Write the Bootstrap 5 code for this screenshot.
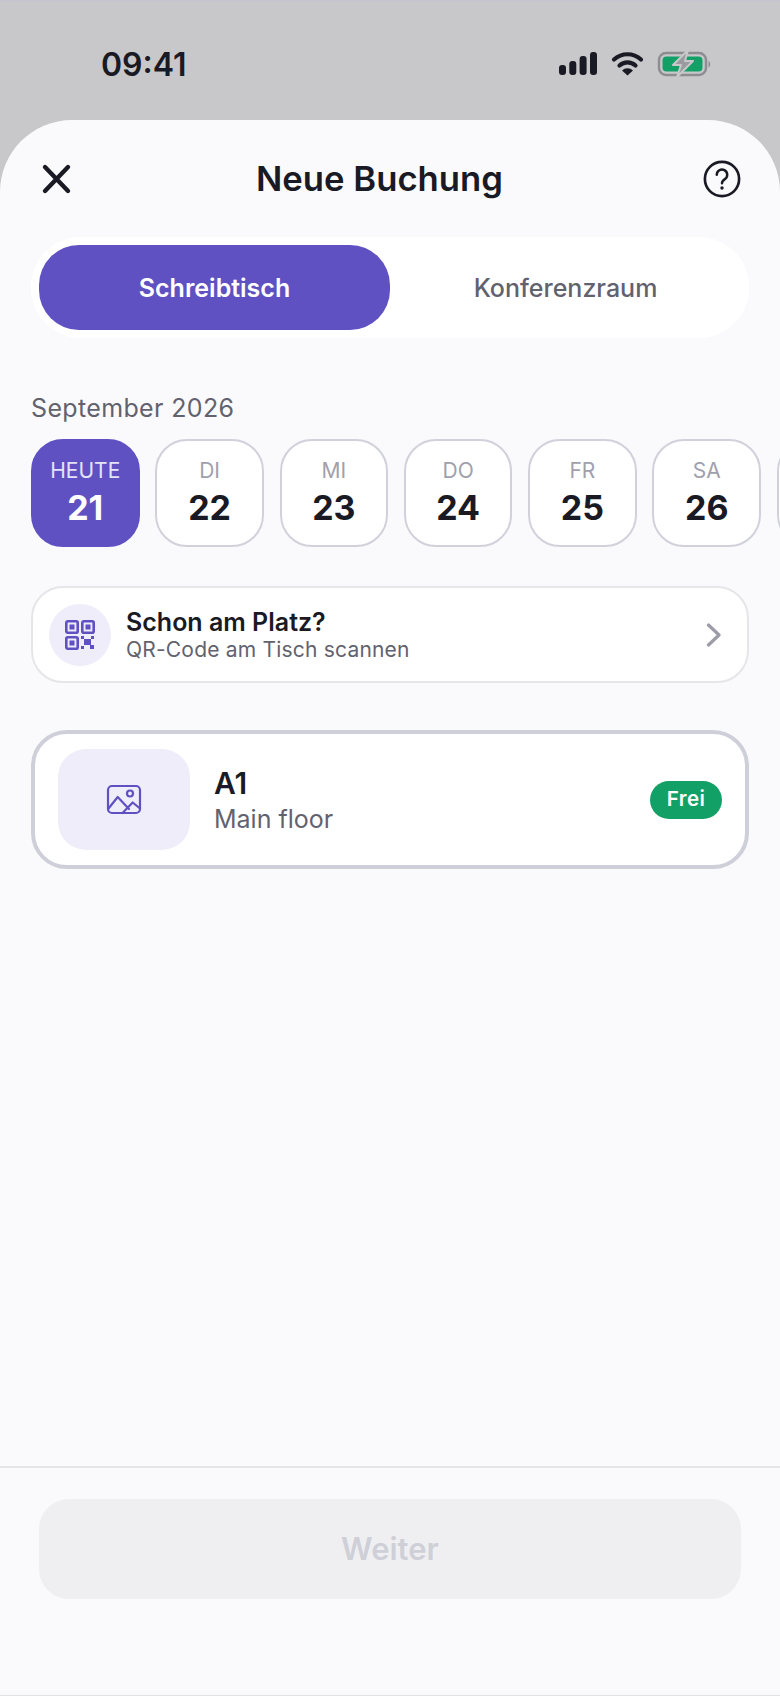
<!DOCTYPE html>
<html lang="de">
<head>
    <meta charset="UTF-8">
    <meta name="viewport" content="width=device-width, initial-scale=1.0">
    <title>Neue Buchung</title>
  <link href="https://cdn.jsdelivr.net/npm/bootstrap@5.3.3/dist/css/bootstrap.min.css" rel="stylesheet">
  <script src="https://cdn.jsdelivr.net/npm/bootstrap@5.3.3/dist/js/bootstrap.bundle.min.js"></script>
  <style>
    html, body { height: 100%; }
    body { font-family: Inter, "Liberation Sans", sans-serif; background: #c8c8ca; color: #1a1a24; overflow: hidden; }
    .phone { height: 1696px; border-top: 1px solid #c4c4d2; border-bottom: 1px solid #e0e0e6; }
    .status-bar { height: 119px; padding: 7px 68px 0 101px; }
    .status-time { font-size: 32px; font-weight: 600; line-height: 1; margin-top: 2px; }
    .sheet { background: #fafafc; border-radius: 72px 72px 0 0; }
    .sheet-head { height: 117px; padding: 0 39px 0 40px; }
    .sheet-title { font-size: 34.700px; font-weight: 600; margin: 0 16px 0 0; line-height: 1; }
    .seg { margin: 0 31px; height: 101px; padding: 8px; background: #fff; border-radius: 50px; }
    .seg-item { flex: 1 1 0; border: 0; background: none; padding-top: 3px; font-size: 25px; font-weight: 500; color: #62626f; border-radius: 40px; }
    .seg-item.is-on { background: #5f51c2; color: #fff; font-weight: 600; }
    .month-label { margin: 56px 0 0 31px; font-size: 25px; line-height: 28px; color: #62626f; letter-spacing: .35px; }
    .day-row { margin: 17px 0 0 31px; gap: 15.800px; overflow: hidden; }
    .day-cell { flex: 0 0 108.500px; height: 108px; background: #fff; border: 2px solid #d1d1dc; border-radius: 32px; text-align: center; }
    .day-name { font-size: 21px; line-height: 24px; margin-top: 18px; color: #a0a0ac; }
    .day-num { font-size: 34px; font-weight: 700; line-height: 40px; margin-top: 5px; }
    .day-cell.is-on { background: #5f51c2; border-color: #5f51c2; color: #fff; }
    .day-cell.is-on .day-name { color: #e6e3f7; }
    .scan-row { margin: 39px 31px 0; height: 97px; padding: 0 25px 0 16px; background: #fff; border: 2px solid #e5e5ea; border-radius: 32px; }
    .scan-icon { width: 62px; height: 62px; background: #efedfa; border-radius: 50%; }
    .scan-text { margin-left: 15px; }
    .scan-title { font-size: 25px; font-weight: 600; line-height: 30px; }
    .scan-sub { font-size: 21px; line-height: 24px; margin-top: 1px; color: #62626f; letter-spacing: .2px; }
    .desk-card { margin: 47px 31px 0; height: 139px; padding: 0 23px; background: #fff; border: 4px solid #cfcfda; border-radius: 36px; }
    .desk-thumb { width: 132px; height: 101px; background: #efedfa; border-radius: 28px; }
    .desk-name { font-size: 30px; font-weight: 600; line-height: 36px; }
    .desk-floor { font-size: 25px; line-height: 32px; margin-top: 2px; color: #62626f; }
    .free-pill { width: 72px; height: 38px; background: #12a066; color: #fff; font-size: 20.500px; font-weight: 600; border-radius: 19px; letter-spacing: .4px; }
    .sheet-foot { height: 229px; padding: 31px 39px 0; border-top: 2px solid #e5e5ea; }
    .next-btn { height: 100px; background: #efeff1; border-radius: 30px; color: #cfcfd8; font-size: 31px; font-weight: 600; border: 0; width: 100%; }
  </style>
</head>
<body>

    <div class="phone d-flex flex-column">

    <!-- Status bar -->
    <div class="status-bar d-flex align-items-center justify-content-between">
        <span class="status-time">09:41</span>
        <svg width="153" height="28" viewBox="0 0 153 28">
            <rect x="0" y="15" width="7" height="10" rx="3" fill="#1a1a24"/>
            <rect x="10.300" y="11" width="7" height="14" rx="3" fill="#1a1a24"/>
            <rect x="20.600" y="6" width="7" height="19" rx="3" fill="#1a1a24"/>
            <rect x="31" y="2" width="7" height="23" rx="3" fill="#1a1a24"/>
            <path d="M55 9.500a20 20 0 0 1 27 0M60.500 15.500a12 12 0 0 1 16 0" fill="none" stroke="#1a1a24" stroke-width="4.200" stroke-linecap="round"/>
            <path d="M63 20.500a8 8 0 0 1 11 0l-5.500 5z" fill="#1a1a24"/>
            <rect x="100" y="3" width="47" height="22" rx="7" fill="none" stroke="#8c8c92" stroke-width="2.400"/>
            <rect x="103.500" y="6.500" width="40" height="15" rx="4" fill="#12a066"/>
            <path d="M149.500 11c2 .5 2.500 5.500 0 6.500z" fill="#8c8c92"/>
            <path d="M129 0 114 15h8l-4 12 16-16h-8l3-11z" fill="#9a9a9f" stroke="#c8c8ca" stroke-width="2" stroke-linejoin="round"/>
        </svg>
    </div>

    <!-- Sheet -->
    <div class="sheet flex-grow-1 d-flex flex-column">

        <div class="sheet-head d-flex align-items-center justify-content-between">
            <svg width="32" height="32" viewBox="0 0 32 32"><path d="M5 4l23 24M28 4 5 28" stroke="#1a1a24" stroke-width="4.400" stroke-linecap="round"/></svg>
            <h1 class="sheet-title">Neue Buchung</h1>
            <svg width="38" height="38" viewBox="0 0 40 40">
                <circle cx="20" cy="20" r="18" fill="none" stroke="#1a1a24" stroke-width="2.800"/>
                <path d="M14.500 15.500a5.500 5.500 0 1 1 8.500 4.600c-2 1.300-3 2.400-3 4.400" fill="none" stroke="#1a1a24" stroke-width="2.600" stroke-linecap="round"/>
                <circle cx="20" cy="29.500" r="1.800" fill="#1a1a24"/>
            </svg>
        </div>

        <div class="seg d-flex">
            <button class="seg-item is-on">Schreibtisch</button>
            <button class="seg-item">Konferenzraum</button>
        </div>

        <div class="month-label">September 2026</div>

        <div class="day-row d-flex">
            <div class="day-cell is-on"><div class="day-name">HEUTE</div><div class="day-num">21</div></div>
            <div class="day-cell"><div class="day-name">DI</div><div class="day-num">22</div></div>
            <div class="day-cell"><div class="day-name">MI</div><div class="day-num">23</div></div>
            <div class="day-cell"><div class="day-name">DO</div><div class="day-num">24</div></div>
            <div class="day-cell"><div class="day-name">FR</div><div class="day-num">25</div></div>
            <div class="day-cell"><div class="day-name">SA</div><div class="day-num">26</div></div>
            <div class="day-cell"></div>
        </div>

        <div class="scan-row d-flex align-items-center">
            <div class="scan-icon d-flex align-items-center justify-content-center flex-shrink-0">
                <svg width="32" height="32" viewBox="0 0 32 32" fill="none" stroke="#5f51c2" stroke-width="2.600">
                    <rect x="2.300" y="2.300" width="11.400" height="11.400" rx="1.500"/>
                    <rect x="18.300" y="2.300" width="11.400" height="11.400" rx="1.500"/>
                    <rect x="2.300" y="18.300" width="11.400" height="11.400" rx="1.500"/>
                    <g fill="#5f51c2" stroke="none">
                        <rect x="5.500" y="5.500" width="5" height="5"/>
                        <rect x="21.500" y="5.500" width="5" height="5"/>
                        <rect x="5.500" y="21.500" width="5" height="5"/>
                        <rect x="17" y="17" width="3" height="3"/>
                        <rect x="27" y="17" width="3" height="3"/>
                        <rect x="20" y="20" width="7" height="6"/>
                        <rect x="17" y="27" width="3" height="3"/>
                        <rect x="26" y="26" width="4" height="4"/>
                    </g>
                </svg>
            </div>
            <div class="scan-text flex-grow-1">
                <div class="scan-title">Schon am Platz?</div>
                <div class="scan-sub">QR-Code am Tisch scannen</div>
            </div>
            <svg width="16" height="24" viewBox="0 0 16 24"><path d="M2.500 2 13 12 2.500 22" fill="none" stroke="#9c9ca8" stroke-width="3.200" stroke-linecap="round" stroke-linejoin="round"/></svg>
        </div>

        <div class="desk-card d-flex align-items-center">
            <div class="desk-thumb d-flex align-items-center justify-content-center flex-shrink-0">
                <svg width="36" height="32" viewBox="0 0 36 32" fill="none" stroke="#5f51c2" stroke-width="2.200" stroke-linejoin="round" stroke-linecap="round">
                    <rect x="2" y="2" width="32" height="27" rx="4"/>
                    <circle cx="24" cy="9.500" r="3"/>
                    <path d="M2.500 24.500 11.700 13 23 25M16.500 29 26.700 18.500 34 24.500"/>
                </svg>
            </div>
            <div class="ms-4 flex-grow-1">
                <div class="desk-name">A1</div>
                <div class="desk-floor">Main floor</div>
            </div>
            <span class="free-pill d-flex align-items-center justify-content-center">Frei</span>
        </div>

        <div class="sheet-foot mt-auto">
            <button class="next-btn" disabled>Weiter</button>
        </div>
    </div>
    </div>

</body>
</html>
